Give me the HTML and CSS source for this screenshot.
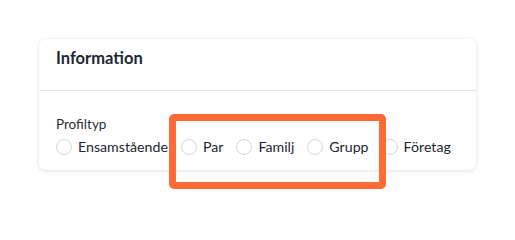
FILE: index.html
```
<!DOCTYPE html>
<html lang="sv">
<head>
<meta charset="utf-8">
<title>Information</title>
<link rel="stylesheet" href="styles.css">
</head>
<body>
<div class="page">
  <section class="card">
    <header class="card-header">
      <h2 class="card-title">Information</h2>
    </header>
    <div class="card-body">
      <div class="field-label">Profiltyp</div>
      <div class="radio-group">
        <label class="radio"><span class="circle"></span><span class="text">Ensamstående</span></label>
        <label class="radio"><span class="circle"></span><span class="text">Par</span></label>
        <label class="radio"><span class="circle"></span><span class="text">Familj</span></label>
        <label class="radio"><span class="circle"></span><span class="text">Grupp</span></label>
        <label class="radio"><span class="circle"></span><span class="text">Företag</span></label>
      </div>
    </div>
  </section>
  <div class="highlight"></div>
</div>
</body>
</html>
```
FILE: styles.css
```
html, body {
  margin: 0;
  padding: 0;
  background: #ffffff;
}
body {
  font-family: "Lato", "Noto Sans", "Liberation Sans", sans-serif;
  color: #222633;
}
.page {
  position: relative;
  width: 515px;
  height: 209px;
  padding: 39px 0 0 39px;
  box-sizing: border-box;
}
.card {
  width: 437px;
  height: 131px;
  box-sizing: border-box;
  background: #fff;
  border-radius: 6px;
  box-shadow: 0 1px 4px rgba(0, 0, 0, 0.12), 0 0 1px rgba(0, 0, 0, 0.08);
  display: flex;
  flex-direction: column;
}
.card-header {
  height: 52px;
  box-sizing: border-box;
  border-bottom: 1px solid #e6e6e6;
  padding: 7px 17px 0;
}
.card-title {
  margin: 0;
  font-size: 16.5px;
  font-weight: 700;
  line-height: 24px;
  letter-spacing: 0;
}
.card-body {
  padding: 24px 17px 0;
}
.field-label {
  font-size: 13.5px;
  line-height: 18px;
  color: #2a2d38;
}
.radio-group {
  display: flex;
  align-items: center;
  gap: 13px;
  margin-top: 4px;
}
.radio {
  display: flex;
  align-items: center;
  gap: 6px;
  font-size: 14.2px;
  line-height: 20px;
}
.circle {
  width: 14px;
  height: 14px;
  border: 1px solid #d6d6d6;
  border-radius: 50%;
  background: #fff;
  flex: none;
}
.highlight {
  position: absolute;
  left: 169px;
  top: 114px;
  width: 217px;
  height: 75px;
  box-sizing: border-box;
  border: 7px solid #ff6a35;
  border-radius: 5px;
}
```
